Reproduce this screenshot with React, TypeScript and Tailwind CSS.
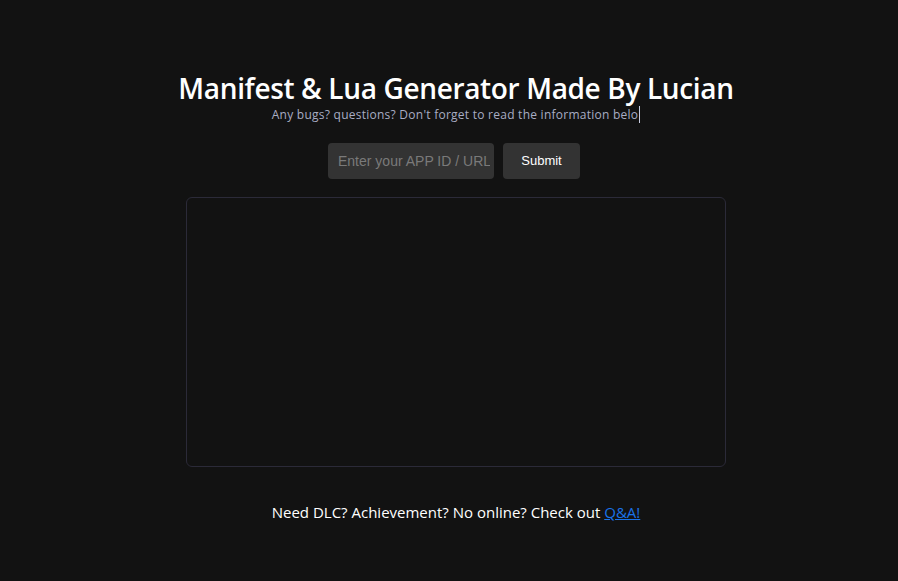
export default function App() {
  return (
    <div className="min-h-screen w-full bg-[#121212] pl-[14px] flex flex-col items-center font-['Open_Sans',sans-serif]">
      <h1 className="mt-[70px] text-[28px] leading-[36px] font-semibold text-white tracking-[-0.35px]">
        Manifest &amp; Lua Generator Made By Lucian
      </h1>
      <p className="mt-[1px] text-[12px] leading-[16px] text-[#a8adc4] tracking-[0.25px]">
        <span className="border-r border-[#c8cce0] pr-[1px]">
          Any bugs? questions? Don't forget to read the information belo
        </span>
      </p>

      <div className="mt-[20px] mr-[4px] flex items-center gap-[9px]">
        <input
          className="w-[166px] h-[36px] rounded-[4px] bg-[#333333] pl-[10px] pr-[4px] text-[14px] text-white outline-none placeholder:text-[#7a7a7a] font-['Liberation_Sans',sans-serif]"
          placeholder="Enter your APP ID / URL"
        />
        <button className="w-[77px] h-[36px] rounded-[4px] bg-[#333333] text-[13px] text-white font-['Liberation_Sans',sans-serif]">
          Submit
        </button>
      </div>

      <div className="mt-[18px] w-[540px] h-[270px] rounded-[6px] border border-[#2b2a38] bg-[#121212]" />

      <p className="mt-[35px] text-[15px] leading-[20px] text-white">
        Need DLC? Achievement? No online? Check out{' '}
        <a href="#" className="text-[#1a73e8] underline">
          Q&amp;A!
        </a>
      </p>
    </div>
  );
}
